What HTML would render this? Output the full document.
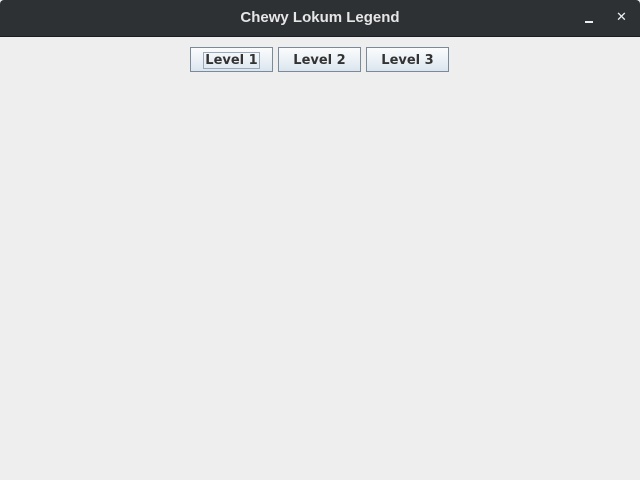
<!DOCTYPE html><html><head><style>
body{margin:0;width:640px;height:480px;background:#eeeeee;position:relative;overflow:hidden;font-family:"DejaVu Sans","Liberation Sans",sans-serif}
.tb{position:absolute;left:0;top:0;width:640px;height:36px;background:#2d3134;border-bottom:1px solid #1b1d1f;border-radius:4px 4px 0 0}
.t{position:absolute;left:0;width:640px;top:9px;text-align:center;color:#e6e6e6;font-size:14px;font-family:"Liberation Sans",sans-serif;font-weight:bold;font-size:15px}
.min{position:absolute;left:585px;top:21px;width:8px;height:2px;background:#eee}
.x{position:absolute;left:616px;top:10px;color:#eee;font-size:13px;font-weight:bold}
.b{position:absolute;top:47px;width:81px;height:23px;border:1px solid #7a8a99;background:linear-gradient(#fbfcfd,#dce6ef);font-size:13px;font-weight:bold;color:#333;text-align:center;line-height:25px;box-sizing:content-box}
.f{border:1px solid #99aabb;padding:0 1px}
</style></head><body>
<div class="tb"><div class="t">Chewy Lokum Legend</div><div class="min"></div><div class="x">✕</div></div>
<div class="b" style="left:190px"><span class="f">Level 1</span></div>
<div class="b" style="left:278px">Level 2</div>
<div class="b" style="left:366px">Level 3</div>
</body></html>
